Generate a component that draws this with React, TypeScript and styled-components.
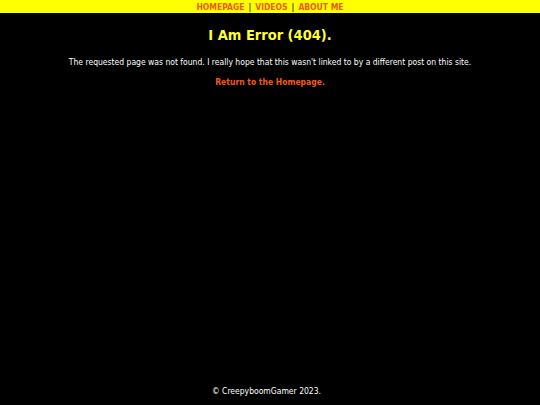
import React from "react";
import styled, { createGlobalStyle } from "styled-components";

const GlobalStyle = createGlobalStyle`
  html, body {
    margin: 0;
    padding: 0;
    background: #000;
  }
  body {
    font-family: "DejaVu Sans Condensed", "DejaVu Sans", Tahoma, sans-serif;
  }
`;

const Page = styled.div`
  min-height: 405px;
  display: flex;
  flex-direction: column;
  background: #000;
  color: #fff;
`;

const NavBar = styled.nav`
  background: #ffff00;
  height: 13px;
  display: flex;
  justify-content: center;
  align-items: center;
  font-size: 8.5px;
  font-weight: bold;
  color: #333;
  gap: 4px;
`;

const NavLink = styled.a`
  color: #f05a1e;
  text-decoration: none;
`;

const Main = styled.main`
  flex: 1;
  display: flex;
  flex-direction: column;
  align-items: center;
  padding-top: 14px;
`;

const Title = styled.h1`
  margin: 0;
  font-size: 14.5px;
  font-weight: bold;
  color: #ffff33;
`;

const Text = styled.p`
  margin: 14px 0 0;
  font-size: 8.5px;
  color: #fff;
`;

const HomeLink = styled.a`
  margin-top: 10px;
  font-size: 8.5px;
  font-weight: bold;
  color: #f05a1e;
  text-decoration: none;
`;

const Footer = styled.footer`
  text-align: center;
  font-size: 8.5px;
  color: #fff;
  padding: 0 7px 9px 0;
`;

export default function App() {
  return (
    <>
      <GlobalStyle />
      <Page>
        <NavBar>
          <NavLink href="#">HOMEPAGE</NavLink>|<NavLink href="#">VIDEOS</NavLink>|
          <NavLink href="#">ABOUT ME</NavLink>
        </NavBar>
        <Main>
          <Title>I Am Error (404).</Title>
          <Text>
            The requested page was not found. I really hope that this wasn't linked to by a
            different post on this site.
          </Text>
          <HomeLink href="#">Return to the Homepage.</HomeLink>
        </Main>
        <Footer>© CreepyboomGamer 2023.</Footer>
      </Page>
    </>
  );
}
